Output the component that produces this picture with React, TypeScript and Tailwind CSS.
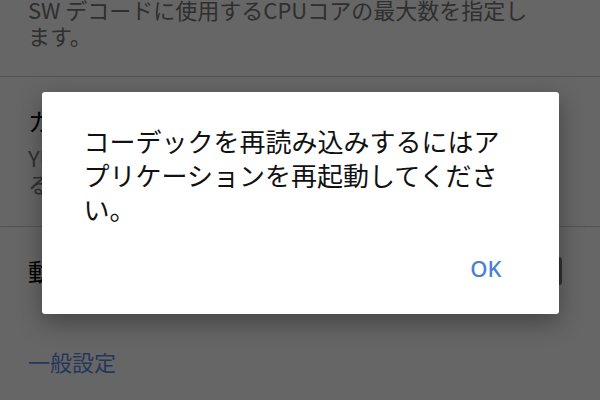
import React from "react"

const font = { fontFamily: '"Noto Sans CJK JP", "Noto Sans", sans-serif' }

export default function App() {
  return (
    <div className="relative h-[400px] w-[600px] overflow-hidden bg-white" style={font}>
      {/* 設定リスト */}
      <div className="border-b border-[#cfcfcf] px-[28px] pb-[28px]">
        <p className="-mt-[4px] text-[22px] leading-[26px] text-[#757575]">
          <span className="block whitespace-nowrap">SW デコードに使用するCPUコアの最大数を指定し</span>
          <span className="block whitespace-nowrap">ます。</span>
        </p>
      </div>

      <div className="border-b border-[#cfcfcf] px-[28px] pt-[29px] pb-[30px]">
        <p className="text-[24px] leading-[30px] text-black">カスタムデコーダーの設定</p>
        <p className="mt-[8px] text-[22px] leading-[26px] text-[#757575]">
          <span className="block whitespace-nowrap">YUV 変換に対応していない端末で有効にす</span>
          <span className="block whitespace-nowrap">ると再生が安定します。</span>
        </p>
      </div>

      <div className="flex items-center justify-between px-[28px] py-[29px]">
        <p className="text-[24px] leading-[30px] text-black">動画の自動再生を有効にする</p>
        <div className="mr-[10px] h-[28px] w-[26px] rounded-[3px] border-[3px] border-[#7a7a7a]" />
      </div>

      <p className="mt-[31px] px-[28px] text-[22px] leading-[30px] text-[#5b8be4]">一般設定</p>

      {/* オーバーレイ */}
      <div className="absolute inset-0 flex items-center justify-center bg-black/60 pt-[6px]">
        <div className="flex h-[222px] w-[517px] flex-col rounded-[3px] bg-white shadow-[0_8px_24px_rgba(0,0,0,0.35)]">
          <p className="px-[42px] pt-[32px] text-[26px] leading-[34px] text-[#111]">
            コーデックを再読み込みするにはアプリケーションを再起動してください。
          </p>
          <div className="mt-auto flex justify-end pb-[26px] pr-[49px]">
            <button
              className="h-[40px] px-[8px] text-[22px] font-medium text-[#4a7fd6]"
              style={{ fontFamily: '"Noto Sans", Roboto, sans-serif' }}
            >
              OK
            </button>
          </div>
        </div>
      </div>
    </div>
  )
}
